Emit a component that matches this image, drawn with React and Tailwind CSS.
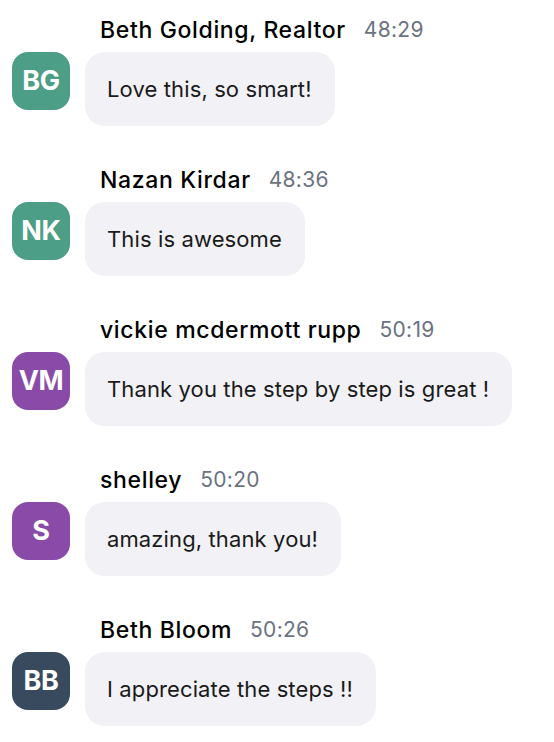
const messages = [
  { initials: "BG", name: "Beth Golding, Realtor", time: "48:29", text: "Love this, so smart!", color: "bg-[#4c9e86]" },
  { initials: "NK", name: "Nazan Kirdar", time: "48:36", text: "This is awesome", color: "bg-[#4c9e86]" },
  { initials: "VM", name: "vickie mcdermott rupp", time: "50:19", text: "Thank you the step by step is great !", color: "bg-[#8a4aa7]" },
  { initials: "S", name: "shelley", time: "50:20", text: "amazing, thank you!", color: "bg-[#8a4aa7]" },
  { initials: "BB", name: "Beth Bloom", time: "50:26", text: "I appreciate the steps !!", color: "bg-[#384a5e]" },
];

const App = () => {
  return (
    <div className="min-h-screen bg-white font-['Inter',sans-serif] antialiased">
      <div className="flex flex-col pl-3">
        {messages.map((m, i) => (
          <div key={i} className="pt-4 pb-6">
            {/* Name + time */}
            <div className="h-7 flex items-center gap-[18px] pl-[88px]">
              <span className="text-[23px] font-medium text-black tracking-[0.65px]">{m.name}</span>
              <span className="text-[21px] text-[#6b7280] tracking-[0.3px]">{m.time}</span>
            </div>

            {/* Avatar + bubble */}
            <div className="mt-2 flex items-start gap-[15px]">
              <div className={`${m.color} w-[58px] h-[58px] rounded-[16px] flex items-center justify-center shrink-0`}>
                <span className="text-white text-[27px] font-bold tracking-[-0.3px]">{m.initials}</span>
              </div>
              <div className="h-[74px] rounded-[20px] bg-[#f1f1f6] pl-[22px] pr-[23px] flex items-center">
                <span className="text-[22px] text-[#1a1a1a] tracking-[0.12px]">{m.text}</span>
              </div>
            </div>
          </div>
        ))}
      </div>
    </div>
  );
};

export default App;
